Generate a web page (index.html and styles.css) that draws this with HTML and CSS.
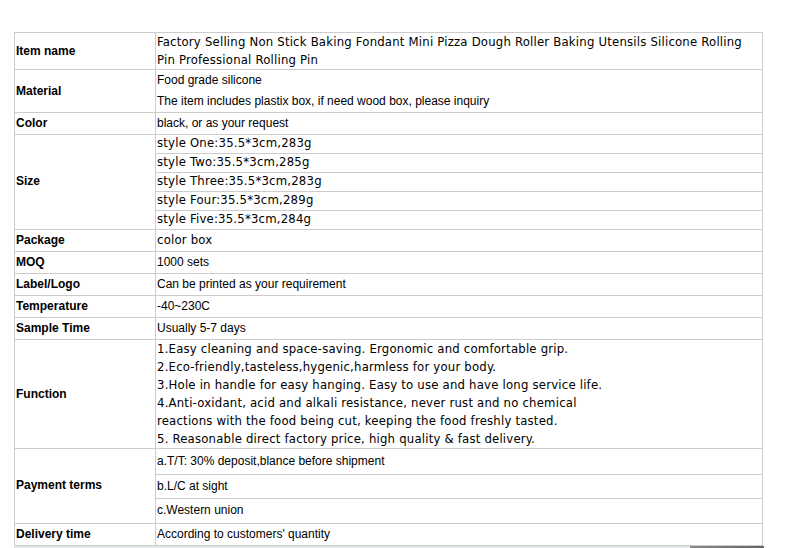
FILE: index.html
```html
<!DOCTYPE html>
<html>
<head>
<meta charset="utf-8">
<link rel="stylesheet" href="styles.css">
</head>
<body>
<div class="wrap">
<table class="spec">
  <tr class="h37 tall">
    <th>Item name</th>
    <td class="t">Factory Selling Non Stick Baking Fondant Mini Pizza Dough Roller Baking Utensils Silicone Rolling Pin Professional Rolling Pin</td>
  </tr>
  <tr class="h43 tall">
    <th>Material</th>
    <td class="a two"><div class="tl">Food grade silicone</div><div class="tl">The item includes plastix box, if need wood box, please inquiry</div></td>
  </tr>
  <tr class="h22">
    <th>Color</th>
    <td class="a">black, or as your request</td>
  </tr>
  <tr class="h19">
    <th rowspan="5">Size</th>
    <td class="t s">style One:35.5*3cm,283g</td>
  </tr>
  <tr class="h19"><td class="t s">style Two:35.5*3cm,285g</td></tr>
  <tr class="h19"><td class="t s">style Three:35.5*3cm,283g</td></tr>
  <tr class="h19"><td class="t s">style Four:35.5*3cm,289g</td></tr>
  <tr class="h19"><td class="t s">style Five:35.5*3cm,284g</td></tr>
  <tr class="h22">
    <th>Package</th>
    <td class="t s">color box</td>
  </tr>
  <tr class="h22">
    <th>MOQ</th>
    <td class="a">1000 sets</td>
  </tr>
  <tr class="h22">
    <th>Label/Logo</th>
    <td class="a">Can be printed as your requirement</td>
  </tr>
  <tr class="h22">
    <th>Temperature</th>
    <td class="a">-40~230C</td>
  </tr>
  <tr class="h22">
    <th>Sample Time</th>
    <td class="a">Usually 5-7 days</td>
  </tr>
  <tr class="h109 tall">
    <th>Function</th>
    <td class="t">1.Easy cleaning and space-saving. Ergonomic and comfortable grip.<br>2.Eco-friendly,tasteless,hygenic,harmless for your body.<br>3.Hole in handle for easy hanging. Easy to use and have long service life.<br>4.Anti-oxidant, acid and alkali resistance, never rust and no chemical<br>reactions with the food being cut, keeping the food freshly tasted.<br>5. Reasonable direct factory price, high quality &amp; fast delivery.</td>
  </tr>
  <tr class="h26">
    <th rowspan="3">Payment terms</th>
    <td class="a">a.T/T: 30% deposit,blance before shipment</td>
  </tr>
  <tr class="h24"><td class="a">b.L/C at sight</td></tr>
  <tr class="h25"><td class="a">c.Western union</td></tr>
  <tr class="h22">
    <th>Delivery time</th>
    <td class="a">According to customers' quantity</td>
  </tr>
</table>
<div class="scroll"><div class="track"></div><div class="thumb"></div></div>
</div>
</body>
</html>
```

FILE: styles.css
```css
html, body {
  margin: 0;
  padding: 0;
  background: #fff;
}
.wrap {
  padding: 32px 0 0 14px;
  width: 750px;
}
.spec {
  border-collapse: collapse;
  width: 749px;
  color: #000;
}
.spec th, .spec td {
  border: 1px solid #cccccc;
  padding: 0 1px 2px 1px;
  vertical-align: middle;
  text-align: left;
}
.spec .tall > th, .spec .tall > td {
  padding-bottom: 0;
}
.spec th {
  width: 138px;
  font: bold 12px "Liberation Sans", Arial, sans-serif;
}
.spec td {
  font: 12px "Liberation Sans", Arial, sans-serif;
}
.spec td.t {
  font-family: "DejaVu Sans Condensed", "DejaVu Sans", sans-serif;
  font-size: 13px;
  line-height: 18px;
  letter-spacing: 0.2px;
}
.spec td.t.s {
  line-height: 16px;
}
.spec .tl {
  line-height: 21px;
}
.h37 { height: 37px; }
.h43 { height: 43px; }
.h22 { height: 22px; }
.h19 { height: 19px; }
.h109 { height: 109px; }
.h26 { height: 26px; }
.h24 { height: 24px; }
.h25 { height: 25px; }
.scroll {
  display: flex;
  height: 3px;
  width: 750px;
}
.track {
  flex: 1;
  background: #e4e7ee;
}
.thumb {
  width: 74px;
  background: linear-gradient(to right, #8a8a8a, #666666);
}
```
